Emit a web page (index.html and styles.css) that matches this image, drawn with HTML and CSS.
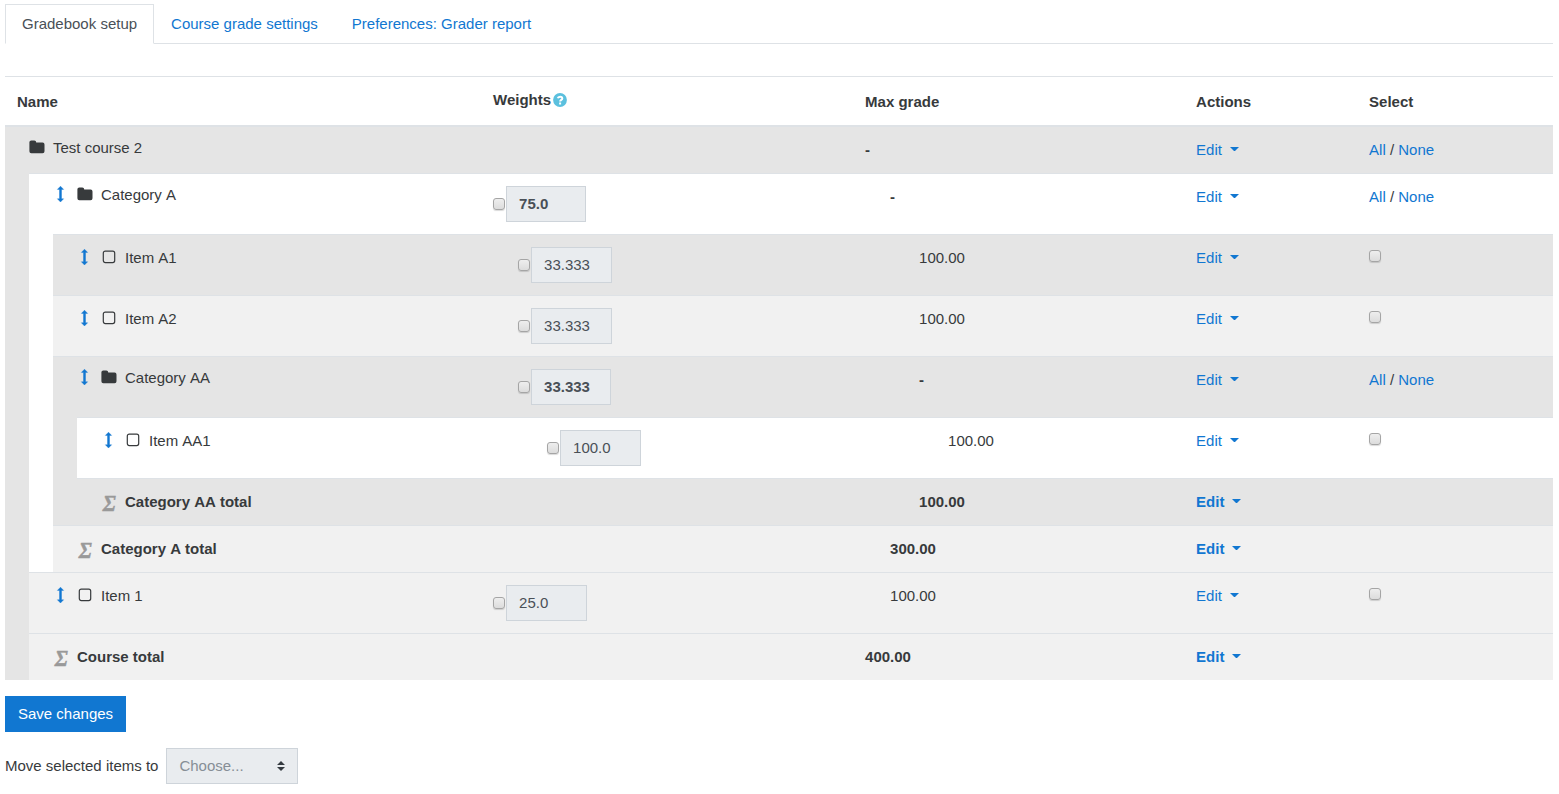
FILE: index.html
```html
<!DOCTYPE html>
<html lang="en">
<head>
    <meta charset="UTF-8">
    <title>Gradebook setup</title>
    <link rel="stylesheet" href="styles.css">
</head>
<body>
<!-- icons used in the table -->
<svg class="sprite" width="0" height="0">
    <symbol id="i-move" viewBox="0 0 16 16">
        <path d="M7.5 .2 L10.6 3.4 H8.5 V12.8 H10.6 L7.5 16 L4.4 12.8 H6.5 V3.4 H4.4 Z" stroke-width=".4" stroke="currentColor" stroke-linejoin="round"/>
    </symbol>
    <symbol id="i-folder" viewBox="0 0 16 16">
        <path d="M.4 3.3 A1.9 1.9 0 0 1 2.3 1.4 H5.3 A1.9 1.9 0 0 1 7.2 3.3 V3.6 H13.6 A1.9 1.9 0 0 1 15.5 5.5 V12.3 A1.9 1.9 0 0 1 13.6 14.2 H2.3 A1.9 1.9 0 0 1 .4 12.3 Z"/>
    </symbol>
    <symbol id="i-item" viewBox="0 0 16 16">
        <rect x="2.3" y="2.2" width="11.4" height="11.4" rx="2" fill="none" stroke="currentColor" stroke-width="1.2"/>
    </symbol>
    <symbol id="i-help" viewBox="0 0 14 14">
        <circle cx="7" cy="7" r="6.9"/>
        <path d="M4.8 5.3 C5.2 3.2 9.3 3 9.3 5.4 C9.3 6.9 7.1 6.8 7.1 8.6" fill="none" stroke="#fff" stroke-width="2"/>
        <rect x="6.1" y="9.5" width="2" height="2" fill="#fff"/>
    </symbol>
</svg>

<ul class="tabs">
    <li><a class="current" href="#">Gradebook setup</a></li>
    <li><a href="#">Course grade settings</a></li>
    <li><a href="#">Preferences: Grader report</a></li>
</ul>

<table class="grades">
    <colgroup>
        <col class="c-level"><col class="c-level"><col class="c-level"><col class="c-name">
        <col class="c-weight"><col class="c-max"><col class="c-actions"><col class="c-select">
    </colgroup>
    <thead>
        <tr>
            <th colspan="4">Name</th>
            <th class="weights">Weights<svg class="help"><use href="#i-help"/></svg></th>
            <th>Max grade</th>
            <th>Actions</th>
            <th>Select</th>
        </tr>
    </thead>
    <tbody>
        <tr class="dark first">
            <td class="level" rowspan="11"></td>
            <td class="name cat" colspan="3"><svg class="icon"><use href="#i-folder"/></svg>Test course 2</td>
            <td></td>
            <td><b>-</b></td>
            <td><a class="edit" href="#">Edit</a></td>
            <td><a href="#">All</a> / <a href="#">None</a></td>
        </tr>
        <tr class="white">
            <td class="level" rowspan="7"></td>
            <td class="name cat spaced" colspan="2"><svg class="icon move"><use href="#i-move"/></svg><svg class="icon"><use href="#i-folder"/></svg>Category A</td>
            <td><div class="weight"><input type="checkbox"><input class="num bold" type="text" value="75.0" disabled></div></td>
            <td class="in1"><b>-</b></td>
            <td><a class="edit" href="#">Edit</a></td>
            <td><a href="#">All</a> / <a href="#">None</a></td>
        </tr>
        <tr class="dark">
            <td class="name spaced" colspan="2"><svg class="icon move"><use href="#i-move"/></svg><svg class="icon"><use href="#i-item"/></svg>Item A1</td>
            <td class="in1"><div class="weight"><input type="checkbox"><input class="num" type="text" value="33.333" disabled></div></td>
            <td class="in2">100.00</td>
            <td><a class="edit" href="#">Edit</a></td>
            <td class="select"><input type="checkbox"></td>
        </tr>
        <tr class="light">
            <td class="name spaced" colspan="2"><svg class="icon move"><use href="#i-move"/></svg><svg class="icon"><use href="#i-item"/></svg>Item A2</td>
            <td class="in1"><div class="weight"><input type="checkbox"><input class="num" type="text" value="33.333" disabled></div></td>
            <td class="in2">100.00</td>
            <td><a class="edit" href="#">Edit</a></td>
            <td class="select"><input type="checkbox"></td>
        </tr>
        <tr class="dark">
            <td class="level" rowspan="3"></td>
            <td class="name cat spaced"><svg class="icon move"><use href="#i-move"/></svg><svg class="icon"><use href="#i-folder"/></svg>Category AA</td>
            <td class="in1"><div class="weight"><input type="checkbox"><input class="num bold" type="text" value="33.333" disabled></div></td>
            <td class="in2"><b>-</b></td>
            <td><a class="edit" href="#">Edit</a></td>
            <td><a href="#">All</a> / <a href="#">None</a></td>
        </tr>
        <tr class="white">
            <td class="name spaced"><svg class="icon move"><use href="#i-move"/></svg><svg class="icon"><use href="#i-item"/></svg>Item AA1</td>
            <td class="in2"><div class="weight"><input type="checkbox"><input class="num" type="text" value="100.0" disabled></div></td>
            <td class="in3">100.00</td>
            <td><a class="edit" href="#">Edit</a></td>
            <td class="select"><input type="checkbox"></td>
        </tr>
        <tr class="dark total">
            <td class="name spaced"><span class="sigma">Σ</span>Category AA total</td>
            <td></td>
            <td class="in2">100.00</td>
            <td><a class="edit" href="#">Edit</a></td>
            <td></td>
        </tr>
        <tr class="light total">
            <td class="name spaced" colspan="2"><span class="sigma">Σ</span>Category A total</td>
            <td></td>
            <td class="in1">300.00</td>
            <td><a class="edit" href="#">Edit</a></td>
            <td></td>
        </tr>
        <tr class="light">
            <td class="name" colspan="3"><svg class="icon move"><use href="#i-move"/></svg><svg class="icon"><use href="#i-item"/></svg>Item 1</td>
            <td><div class="weight"><input type="checkbox"><input class="num" type="text" value="25.0" disabled></div></td>
            <td class="in1">100.00</td>
            <td><a class="edit" href="#">Edit</a></td>
            <td class="select"><input type="checkbox"></td>
        </tr>
        <tr class="light total">
            <td class="name" colspan="3"><span class="sigma">Σ</span>Course total</td>
            <td></td>
            <td>400.00</td>
            <td><a class="edit" href="#">Edit</a></td>
            <td></td>
        </tr>
    </tbody>
</table>

<button class="save" type="button">Save changes</button>

<div class="bulkmove">
    <span>Move selected items to</span>
    <div class="choose">
        <span>Choose...</span>
        <svg width="8" height="10" viewBox="0 0 8 10"><path d="M0 4 L4 0 L8 4 Z M0 6 L4 10 L8 6 Z"/></svg>
    </div>
</div>
</body>
</html>
```

FILE: styles.css
```css
* {
    box-sizing: border-box;
}

body {
    margin: 4px 6px 0 5px;
    background: #fff;
    color: #373a3c;
    font: 15px/22px "Liberation Sans", Arial, sans-serif;
}

a {
    color: #1177d1;
    text-decoration: none;
}

.sprite {
    display: none;
}

/* tabs */
.tabs {
    display: flex;
    height: 40px;
    margin: 0 0 32px;
    padding: 0;
    list-style: none;
    border-bottom: 1px solid #dee2e6;
}

.tabs a {
    display: block;
    height: 40px;
    padding: 8px 16px;
    border: 1px solid transparent;
}

.tabs a.current {
    color: #495057;
    background: #fff;
    border-color: #dee2e6 #dee2e6 #fff;
}

/* table */
.grades {
    width: 1548px;
    table-layout: fixed;
    border-collapse: separate;
    border-spacing: 0;
}

.c-level {
    width: 24px;
}

.c-name {
    width: 404px;
}

.c-weight {
    width: 372px;
}

.c-max {
    width: 331px;
}

.c-actions {
    width: 173px;
}

.c-select {
    width: 196px;
}

.grades th {
    height: 51px;
    padding: 12px;
    text-align: left;
    vertical-align: bottom;
    border-top: 1px solid #dee2e6;
    border-bottom: 2px solid #dee2e6;
}

.grades th.weights {
    padding-bottom: 14px;
}

.help {
    width: 14px;
    height: 14px;
    margin-left: 2px;
    vertical-align: -2px;
    fill: #5bc0de;
}

.grades td {
    padding: 12px;
    vertical-align: top;
    border-top: 1px solid #dee2e6;
}

.grades .first td {
    border-top: 0;
}

.dark td {
    background: #e5e5e5;
}

.light td {
    background: #f1f1f1;
}

.white td {
    background: #fff;
}

.total td {
    font-weight: bold;
}

.grades td.level {
    padding: 0;
}

.grades td.name {
    padding-left: 24px;
}

.grades td.cat {
    padding: 10px 0 12px;
}

.spaced {
    word-spacing: .8px;
}

.total .spaced {
    word-spacing: .5px;
}

.grades td.in1 {
    padding-left: 37px;
}

.grades td.in2 {
    padding-left: 66px;
}

.grades td.in3 {
    padding-left: 95px;
}

.icon {
    width: 16px;
    height: 16px;
    margin-right: 8px;
    vertical-align: -2px;
    fill: currentColor;
}

.move {
    color: #1177d1;
}

.sigma {
    display: inline-block;
    width: 24px;
    height: 22px;
    padding-left: 2px;
    color: #999;
    font: italic bold 24px/24px "Liberation Serif", serif;
    -webkit-text-stroke: .5px #999;
    vertical-align: top;
    transform: scaleX(.88);
    transform-origin: left;
}

.edit:after {
    content: "";
    display: inline-block;
    box-sizing: content-box;
    width: 1px;
    margin-left: 8px;
    vertical-align: 4px;
    border-top: 4px solid;
    border-left: 4px solid transparent;
    border-right: 4px solid transparent;
}

/* form controls */
input[type=checkbox] {
    appearance: none;
    display: block;
    width: 12px;
    height: 12px;
    margin: 0;
    background: linear-gradient(#eee, #dcdcdc);
    border: 1px solid #a5a5a5;
    border-radius: 3px;
    box-shadow: 0 1px 1px rgba(0, 0, 0, .15);
}

.select input[type=checkbox] {
    margin-top: 3px;
}

.weight {
    display: flex;
    align-items: center;
    gap: 1px;
}

.num {
    width: 81px;
    height: 36px;
    padding: 0 12px 2px;
    color: #495057;
    background: #e9ecef;
    border: 1px solid #ced4da;
    font: inherit;
}

.num.bold {
    width: 80px;
    font-weight: bold;
}

.save {
    display: block;
    height: 36px;
    margin: 16px 0;
    padding: 0 13px;
    color: #fff;
    background: #1177d1;
    border: 0;
    font: inherit;
}

.bulkmove {
    display: flex;
    align-items: center;
    gap: 8px;
}

.choose {
    display: flex;
    align-items: center;
    justify-content: space-between;
    width: 132px;
    height: 36px;
    padding: 0 12px;
    color: #868e96;
    background: #e9ecef;
    border: 1px solid #ced4da;
}

.choose svg {
    fill: #343a40;
}
```
